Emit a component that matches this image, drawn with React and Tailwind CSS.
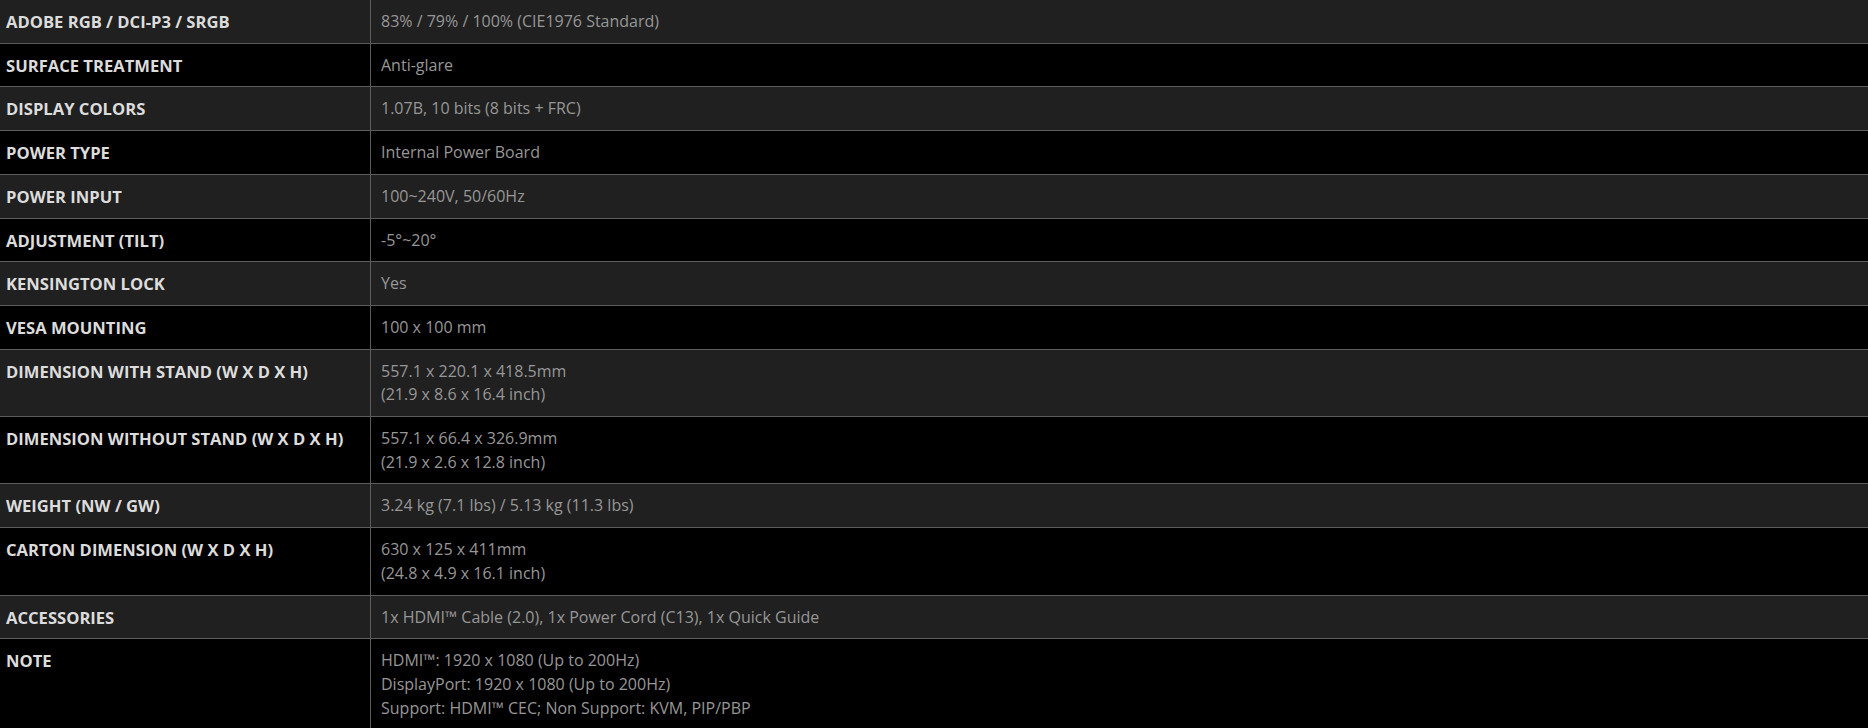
const SPECS = [
  { label: 'ADOBE RGB / DCI-P3 / SRGB', value: ['83% / 79% / 100% (CIE1976 Standard)'] },
  { label: 'SURFACE TREATMENT', value: ['Anti-glare'] },
  { label: 'DISPLAY COLORS', value: ['1.07B, 10 bits (8 bits + FRC)'] },
  { label: 'POWER TYPE', value: ['Internal Power Board'] },
  { label: 'POWER INPUT', value: ['100~240V, 50/60Hz'] },
  { label: 'ADJUSTMENT (TILT)', value: ['-5°~20°'] },
  { label: 'KENSINGTON LOCK', value: ['Yes'] },
  { label: 'VESA MOUNTING', value: ['100 x 100 mm'] },
  { label: 'DIMENSION WITH STAND (W X D X H)', value: ['557.1 x 220.1 x 418.5mm', '(21.9 x 8.6 x 16.4 inch)'] },
  { label: 'DIMENSION WITHOUT STAND (W X D X H)', value: ['557.1 x 66.4 x 326.9mm', '(21.9 x 2.6 x 12.8 inch)'] },
  { label: 'WEIGHT (NW / GW)', value: ['3.24 kg (7.1 lbs) / 5.13 kg (11.3 lbs)'] },
  { label: 'CARTON DIMENSION (W X D X H)', value: ['630 x 125 x 411mm', '(24.8 x 4.9 x 16.1 inch)'] },
  { label: 'ACCESSORIES', value: ['1x HDMI™ Cable (2.0), 1x Power Cord (C13), 1x Quick Guide'] },
  {
    label: 'NOTE',
    value: [
      'HDMI™: 1920 x 1080 (Up to 200Hz)',
      'DisplayPort: 1920 x 1080 (Up to 200Hz)',
      'Support: HDMI™ CEC; Non Support: KVM, PIP/PBP',
    ],
  },
];

function SpecRow({ spec, index }) {
  // alternating stripes, first row is the grey one
  const shade = index % 2 === 0 ? 'bg-[#202020]' : 'bg-black';
  return (
    <div className={`grid grid-cols-[371px_1fr] border-b border-[#5c5c5c] ${shade}`}>
      <div className="border-r border-[#5c5c5c] pl-[6px] pr-2 pt-[10px] pb-[9px] text-[16.6px] font-bold text-[#dcdcdc]">
        {spec.label}
      </div>
      <div className="pl-[10px] pr-2 pt-[10px] pb-[9px] text-[16px] text-[#979797]">
        {spec.value.map((line) => (
          <div key={line}>{line}</div>
        ))}
      </div>
    </div>
  );
}

export default function App() {
  return (
    <div
      className="h-[728px] w-full overflow-hidden bg-black leading-[23.7px]"
      style={{ fontFamily: '"Open Sans", "Noto Sans", sans-serif' }}
    >
      {SPECS.map((spec, i) => (
        <SpecRow key={spec.label} spec={spec} index={i} />
      ))}
    </div>
  );
}
